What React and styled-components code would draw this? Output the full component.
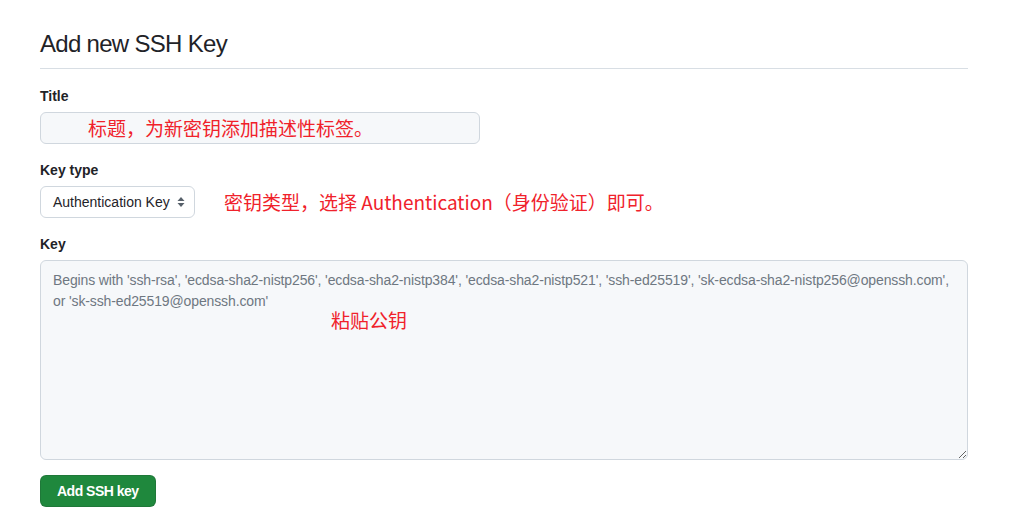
import React from 'react';
import styled, {createGlobalStyle} from 'styled-components';

const GlobalStyle = createGlobalStyle`
	body {
		margin: 0;
		background: #ffffff;
		font-family: "Liberation Sans", "Noto Sans CJK SC", sans-serif;
		color: #1f2328;
	}
`;

const Page = styled.div`
	width: 928px;
	padding: 26px 0 0 40px;
`;

const Subhead = styled.h2`
	margin: 0 0 17px;
	padding-bottom: 6px;
	border-bottom: 1px solid #d8dee4;
	font-size: 24px;
	font-weight: 400;
	line-height: 36px;
	letter-spacing: -0.7px;
`;

const Field = styled.div`
	margin-bottom: ${p => (p.last ? '15px' : '16px')};
`;

const Label = styled.label`
	display: block;
	margin-bottom: 6px;
	font-size: 14px;
	font-weight: 700;
	line-height: 20px;
`;

const Note = styled.span`
	font-family: "Noto Sans CJK SC", sans-serif;
	font-size: 19px;
	line-height: 22px;
	color: #f0222b;
	white-space: nowrap;
`;

const TitleBox = styled.div`
	box-sizing: border-box;
	width: 440px;
	height: 32px;
	display: flex;
	align-items: center;
	padding-left: 47px;
	background: #f6f8fa;
	border: 1px solid #d0d7de;
	border-radius: 6px;
`;

const Row = styled.div`
	display: flex;
	align-items: center;
	gap: 29px;
`;

const Select = styled.div`
	box-sizing: border-box;
	width: 155px;
	height: 32px;
	display: flex;
	align-items: center;
	justify-content: space-between;
	padding: 0 9px 0 12px;
	border: 1px solid #d0d7de;
	border-radius: 6px;
	font-size: 14px;
	color: #1f2328;
`;

const KeyWrap = styled.div`
	position: relative;
`;

const KeyArea = styled.textarea`
	box-sizing: border-box;
	display: block;
	width: 928px;
	height: 200px;
	padding: 9px 10px 9px 12px;
	background: #f6f8fa;
	border: 1px solid #d0d7de;
	border-radius: 6px;
	font-family: "Liberation Sans", sans-serif;
	font-size: 14px;
	line-height: 21px;
	letter-spacing: -0.12px;
	resize: vertical;
	outline: none;

	&::placeholder {
		color: #6e7781;
	}
`;

const KeyNote = styled(Note)`
	position: absolute;
	left: 291px;
	top: 49px;
`;

const Button = styled.button`
	height: 32px;
	padding: 0 16px;
	background: #1f883d;
	border: 1px solid rgba(31, 35, 40, 0.15);
	border-radius: 6px;
	color: #ffffff;
	font-family: "Liberation Sans", sans-serif;
	font-size: 14px;
	font-weight: 700;
	letter-spacing: -0.5px;
`;

const placeholder = "Begins with 'ssh-rsa', 'ecdsa-sha2-nistp256', 'ecdsa-sha2-nistp384', 'ecdsa-sha2-nistp521', 'ssh-ed25519', 'sk-ecdsa-sha2-nistp256@openssh.com',\nor 'sk-ssh-ed25519@openssh.com'";

function Arrows() {
	return (
		<svg width="8" height="12" viewBox="0 0 8 12">
			<path d="M4 1 L7.5 5 H0.5 Z" fill="#57606a"/>
			<path d="M4 11 L7.5 7 H0.5 Z" fill="#57606a"/>
		</svg>
	);
}

export default function App() {
	return (
		<Page>
			<GlobalStyle/>
			<Subhead>Add new SSH Key</Subhead>

			<Field>
				<Label>Title</Label>
				<TitleBox>
					<Note>标题，为新密钥添加描述性标签。</Note>
				</TitleBox>
			</Field>

			<Field>
				<Label>Key type</Label>
				<Row>
					<Select>
						<span>Authentication Key</span>
						<Arrows/>
					</Select>
					<Note>密钥类型，选择 Authentication（身份验证）即可。</Note>
				</Row>
			</Field>

			<Field last>
				<Label>Key</Label>
				<KeyWrap>
					<KeyArea placeholder={placeholder}/>
					<KeyNote>粘贴公钥</KeyNote>
				</KeyWrap>
			</Field>

			<Button>Add SSH key</Button>
		</Page>
	);
}
